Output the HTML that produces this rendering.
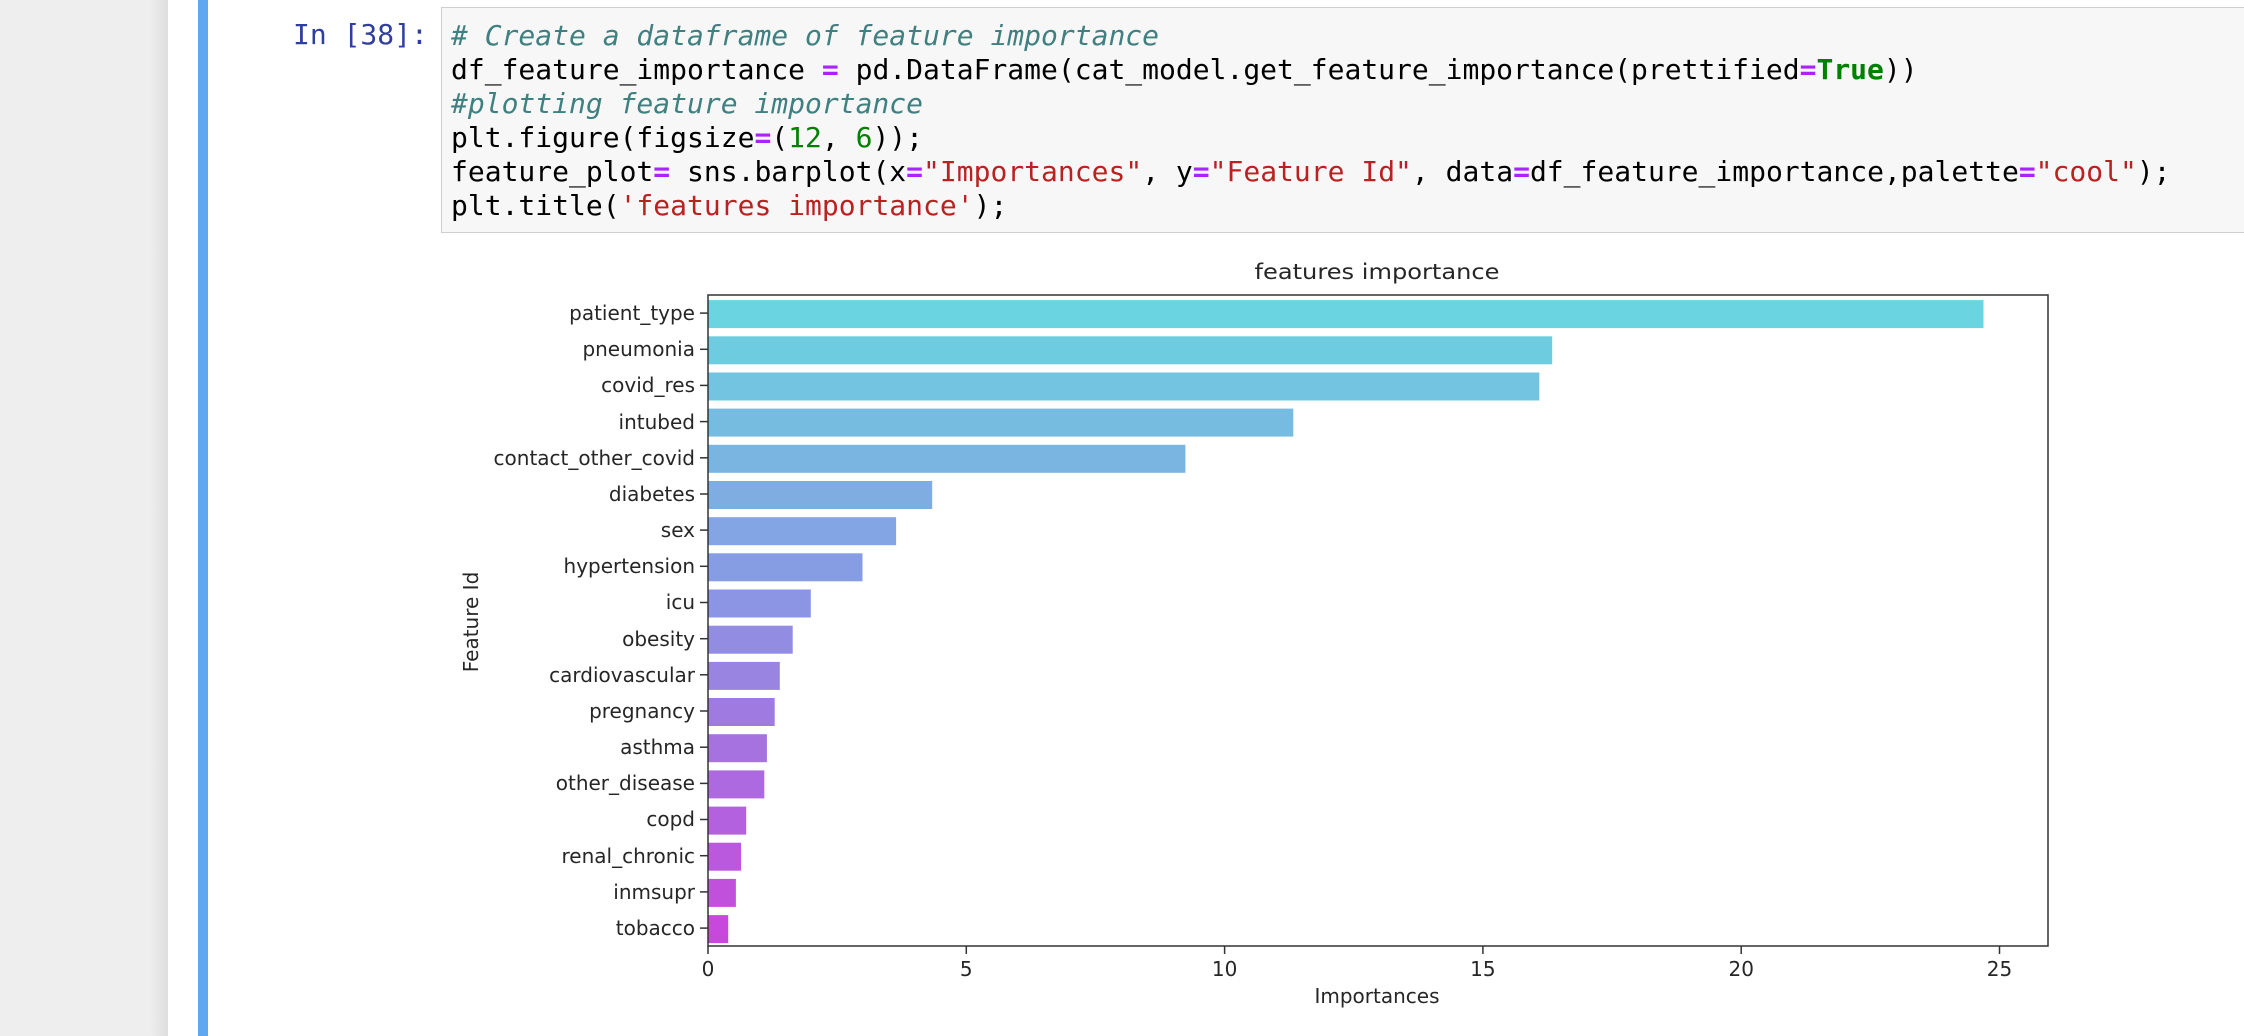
<!DOCTYPE html>
<html><head><meta charset="utf-8">
<style>
html,body{margin:0;padding:0;width:2244px;height:1036px;overflow:hidden;background:#fff;}
.side{position:absolute;left:0;top:0;width:168px;height:1036px;background:linear-gradient(to right,#eeeeee 0,#eeeeee 150px,#dedede 168px);}
.blue{position:absolute;left:198px;top:0;width:10px;height:1036px;background:#5fa8f0;}
.prompt{position:absolute;left:293px;top:18px;font:28px/34px "DejaVu Sans Mono","Liberation Mono",monospace;color:#303f9f;letter-spacing:0px;}
.code{position:absolute;left:441px;top:7px;width:1803px;height:226px;background:#f7f7f7;border:1.5px solid #cfcfcf;border-right:none;box-sizing:border-box;}
pre{margin:0;position:absolute;left:9px;top:11px;font:28px/34px "DejaVu Sans Mono","Liberation Mono",monospace;color:#000;letter-spacing:0px;}
.c{color:#408080;font-style:italic}.o{color:#aa22ff;font-weight:bold}.s{color:#ba2121}.n{color:#008000}.k{color:#008000;font-weight:bold}
svg{position:absolute;left:0;top:0;}
svg text{font-family:"DejaVu Sans","Liberation Sans",sans-serif;fill:#262626;}
</style></head><body>
<div class="side"></div>
<div class="blue"></div>
<div class="prompt">In [38]:</div>
<div class="code"><pre><span class="c"># Create a dataframe of feature importance</span>
df_feature_importance <span class="o">=</span> pd.DataFrame(cat_model.get_feature_importance(prettified<span class="o">=</span><span class="k">True</span>))
<span class="c">#plotting feature importance</span>
plt.figure(figsize<span class="o">=</span>(<span class="n">12</span>, <span class="n">6</span>));
feature_plot<span class="o">=</span> sns.barplot(x<span class="o">=</span><span class="s">"Importances"</span>, y<span class="o">=</span><span class="s">"Feature Id"</span>, data<span class="o">=</span>df_feature_importance,palette<span class="o">=</span><span class="s">"cool"</span>);
plt.title(<span class="s">'features importance'</span>);</pre></div>
<svg width="2244" height="1036" viewBox="0 0 2244 1036">
<text x="1377" y="279" font-size="21" text-anchor="middle" textLength="245" lengthAdjust="spacingAndGlyphs">features importance</text>
<g stroke="#fff" stroke-width="1">
<rect x="708" y="299.6" width="1276" height="29" fill="#6ad4e0"/>
<rect x="708" y="335.8" width="844.7" height="29" fill="#6ecce0"/>
<rect x="708" y="372.0" width="831.8" height="29" fill="#72c4e1"/>
<rect x="708" y="408.1" width="585.8" height="29" fill="#76bce1"/>
<rect x="708" y="444.3" width="477.9" height="29" fill="#7ab5e2"/>
<rect x="708" y="480.5" width="224.7" height="29" fill="#7fade2"/>
<rect x="708" y="516.7" width="188.6" height="29" fill="#83a5e3"/>
<rect x="708" y="552.8" width="155.0" height="29" fill="#879de3"/>
<rect x="708" y="589.0" width="103.3" height="29" fill="#8b95e4"/>
<rect x="708" y="625.2" width="85.2" height="29" fill="#928ce3"/>
<rect x="708" y="661.4" width="72.3" height="29" fill="#9984e2"/>
<rect x="708" y="697.5" width="67.2" height="29" fill="#9f7be1"/>
<rect x="708" y="733.7" width="59.4" height="29" fill="#a672e0"/>
<rect x="708" y="769.9" width="56.8" height="29" fill="#ad6ae0"/>
<rect x="708" y="806.1" width="38.7" height="29" fill="#b461df"/>
<rect x="708" y="842.2" width="33.6" height="29" fill="#ba58de"/>
<rect x="708" y="878.4" width="28.4" height="29" fill="#c150dd"/>
<rect x="708" y="914.6" width="20.7" height="29" fill="#c847dc"/>
</g>
<rect x="708" y="295" width="1340" height="651" fill="none" stroke="#333" stroke-width="1.5"/>
<g stroke="#333" stroke-width="1.5">
<line x1="700" y1="313.1" x2="708" y2="313.1"/><line x1="700" y1="349.3" x2="708" y2="349.3"/><line x1="700" y1="385.4" x2="708" y2="385.4"/><line x1="700" y1="421.6" x2="708" y2="421.6"/><line x1="700" y1="457.8" x2="708" y2="457.8"/><line x1="700" y1="494.0" x2="708" y2="494.0"/><line x1="700" y1="530.1" x2="708" y2="530.1"/><line x1="700" y1="566.3" x2="708" y2="566.3"/><line x1="700" y1="602.5" x2="708" y2="602.5"/><line x1="700" y1="638.7" x2="708" y2="638.7"/><line x1="700" y1="674.8" x2="708" y2="674.8"/><line x1="700" y1="711.0" x2="708" y2="711.0"/><line x1="700" y1="747.2" x2="708" y2="747.2"/><line x1="700" y1="783.4" x2="708" y2="783.4"/><line x1="700" y1="819.5" x2="708" y2="819.5"/><line x1="700" y1="855.7" x2="708" y2="855.7"/><line x1="700" y1="891.9" x2="708" y2="891.9"/><line x1="700" y1="928.1" x2="708" y2="928.1"/>
<line x1="708" y1="946" x2="708" y2="954"/><line x1="966.3" y1="946" x2="966.3" y2="954"/><line x1="1224.6" y1="946" x2="1224.6" y2="954"/><line x1="1482.9" y1="946" x2="1482.9" y2="954"/><line x1="1741.2" y1="946" x2="1741.2" y2="954"/><line x1="1999.5" y1="946" x2="1999.5" y2="954"/>
</g>
<g font-size="20" text-anchor="end">
<text x="695" y="320">patient_type</text><text x="695" y="356">pneumonia</text><text x="695" y="392">covid_res</text><text x="695" y="429">intubed</text><text x="695" y="465">contact_other_covid</text><text x="695" y="501">diabetes</text><text x="695" y="537">sex</text><text x="695" y="573">hypertension</text><text x="695" y="609">icu</text><text x="695" y="646">obesity</text><text x="695" y="682">cardiovascular</text><text x="695" y="718">pregnancy</text><text x="695" y="754">asthma</text><text x="695" y="790">other_disease</text><text x="695" y="826">copd</text><text x="695" y="863">renal_chronic</text><text x="695" y="899">inmsupr</text><text x="695" y="935">tobacco</text>
</g>
<g font-size="20" text-anchor="middle">
<text x="708" y="976">0</text><text x="966.3" y="976">5</text><text x="1224.6" y="976">10</text><text x="1482.9" y="976">15</text><text x="1741.2" y="976">20</text><text x="1999.5" y="976">25</text>
<text x="1377" y="1003">Importances</text>
<text transform="translate(478,622) rotate(-90)" x="0" y="0">Feature Id</text>
</g>
</svg>
</body></html>
